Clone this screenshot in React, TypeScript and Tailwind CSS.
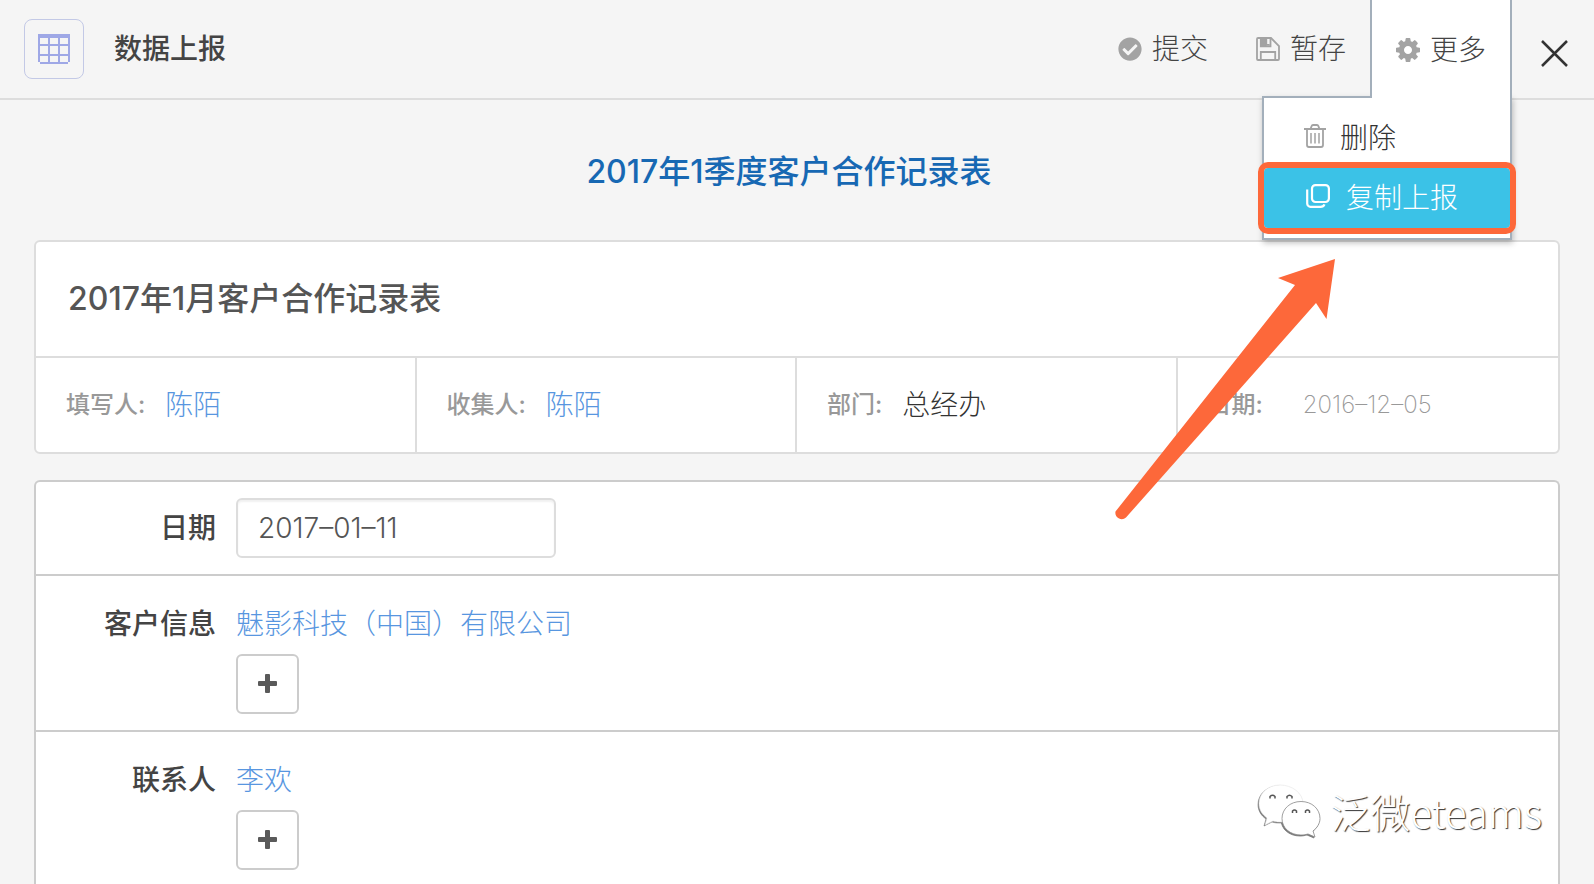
import { useState } from "react";
import type { ReactNode } from "react";
import { FaCheckCircle } from "react-icons/fa";

const META = [
  { label: "填写人:", value: "陈陌", kind: "link" },
  { label: "收集人:", value: "陈陌", kind: "link" },
  { label: "部门:", value: "总经办", kind: "text" },
  { label: "日期:", value: "2016–12–05", kind: "date" },
];

const TOOL_BTN = "flex items-center gap-2.5 px-6 text-[28px] leading-10 font-light text-[#444]";
const MENU_ITEM = "flex h-[60px] w-full items-center text-[28px] leading-10 font-light";

function GridIcon() {
  return (
    <svg viewBox="0 0 32 30" className="h-[30px] w-8" fill="#9fa8e6" shapeRendering="crispEdges">
      <path d="M0 0h32v4H0zM0 4h2v24H0zM10 4h2v24h-2zM20 4h2v24h-2zM30 4h2v24h-2zM2 10h28v2H2zM2 20h28v2H2zM2 28h28v2H2z" />
    </svg>
  );
}

function SaveIcon() {
  return (
    <svg viewBox="0 0 24 24" className="size-6" fill="none" stroke="#a3a3a3" strokeWidth="1.8">
      <path d="M2 1H15L23 9v13a1 1 0 0 1-1 1H2a1 1 0 0 1-1-1V2a1 1 0 0 1 1-1Z" />
      <path d="M4.800 1v8.400h9.700V1M4.800 23v-8h14.400v8" />
      <path d="M4.800 1h5.600v8.400H4.800Z" fill="#a3a3a3" stroke="none" />
      <path d="M10.300 1v6.800h3.400" />
    </svg>
  );
}

function GearIcon() {
  return (
    <svg viewBox="128 128 1536 1536" className="size-6" fill="#a3a3a3">
      <path d="M1152 896q0-106-75-181t-181-75-181 75-75 181 75 181 181 75 181-75 75-181zm512-109v222q0 12-8 23t-20 13l-185 28q-19 54-39 91 35 50 107 138 10 12 10 25t-9 23q-27 37-99 108t-94 71q-12 0-26-9l-138-108q-44 23-91 38-16 136-29 186-7 28-36 28h-222q-14 0-24.500-8.500t-11.500-21.500l-28-184q-49-16-90-37l-141 107q-10 9-25 9-14 0-25-11-126-114-165-168-7-10-7-23 0-12 8-23 15-21 51-66.500t54-70.500q-27-50-41-99l-183-27q-13-2-21-12.500t-8-23.500v-222q0-12 8-23t19-13l186-28q14-46 39-92-40-57-107-138-10-12-10-24 0-10 9-23 26-36 98.500-107.500t94.500-71.500q13 0 26 10l138 107q44-23 91-38 16-136 29-186 7-28 36-28h222q14 0 24.500 8.500t11.500 21.500l28 184q49 16 90 37l142-107q9-9 24-9 13 0 25 10 129 119 165 170 7 8 7 22 0 12-8 23-15 21-51 66.500t-54 70.500q26 50 41 98l183 28q13 2 21 12.500t8 23.500z" />
    </svg>
  );
}

function TrashIcon() {
  return (
    <svg viewBox="0 0 22 24" className="mb-1 h-6 w-[22px]" fill="none" stroke="#a3a3a3" strokeWidth="1.8">
      <path d="M0 5h22M6.500 5l1.200-3.100Q8 1 9 1h4q1 0 1.300.9L15.500 5" />
      <path d="M3 5v16a2 2 0 0 0 2 2h12a2 2 0 0 0 2-2V5" />
      <path d="M7 9v10.500M11 9v10.500M15 9v10.500" strokeWidth="1.500" />
    </svg>
  );
}

function CopyIcon() {
  return (
    <svg viewBox="0 0 24 24" className="mb-1 size-6" fill="none" stroke="#fff" strokeWidth="2.2">
      <rect x="6" y="1.100" width="16.900" height="16.900" rx="3.500" />
      <path d="M1.200 5.500V19.500a3.300 3.300 0 0 0 3.300 3.300h10q3 0 4-2.500" />
    </svg>
  );
}

function WechatIcon() {
  return (
    <svg viewBox="0 0 64 54" className="h-[54px] w-16 overflow-visible drop-shadow-[-1px_1px_0_#777]">
      <path
        fill="#fff"
        stroke="#e4e4e4"
        strokeWidth=".6"
        d="M22 1C10 1 1 9 1 19.500c0 6 3 11 8 14.500L7 41l8-4c3 1 6 1 9 1 12 0 21-8 21-18.500S34 1 22 1Z"
      />
      <path
        fill="#fff"
        stroke="#888"
        strokeWidth=".8"
        d="M43 17.500c-11 0-19 7.500-19 17s8 16.500 19 16.500c3 0 5-.5 7-1l7 3-2-6c4-3 7-7.500 7-12.500 0-9.500-8-17-19-17Z"
      />
      <path
        fill="none"
        stroke="#555"
        strokeWidth="1.500"
        d="M12 14.500v-2q2.500-2.500 5 0v2M29 14.500v-2q2.500-2.500 5 0v2M34.500 29v-2q2-2 4 0v2M47.500 29v-2q2-2 4 0v2"
      />
    </svg>
  );
}

function PlusButton({ label }: { label: string }) {
  return (
    <button
      aria-label={label}
      className="flex h-[60px] w-[63px] items-center justify-center rounded-md border-2 border-[#ccc] bg-white pb-0.5"
    >
      <svg viewBox="0 0 19 19" className="size-[19px]" fill="#5a5a5a">
        <path d="M8 0h3q1 0 1 1v6h6q1 0 1 1v3q0 1-1 1h-6v6q0 1-1 1H8q-1 0-1-1v-6H1q-1 0-1-1V8q0-1 1-1h6V1q0-1 1-1Z" />
      </svg>
    </button>
  );
}

function RelatedRow({ label, value, last }: { label: string; value: string; last?: boolean }) {
  return (
    <div className={last ? "flex gap-5 pt-7 pb-4" : "flex gap-5 border-b-2 border-[#ccc] pt-7 pb-4"}>
      <div className="w-[180px] text-right text-[28px] leading-10 font-medium text-[#444]">{label}</div>
      <div className="flex flex-col items-start gap-2.5">
        <a href="#" className="text-[28px] leading-10 font-light text-[#5896e0]">
          {value}
        </a>
        <PlusButton label={`添加${label}`} />
      </div>
    </div>
  );
}

function MetaCell({ label, children }: { label: string; children: ReactNode }) {
  return (
    <div className="flex h-[94px] items-center gap-5 border-r-2 border-[#ddd] pl-[30px] last:border-r-0">
      <span className="text-2xl font-medium text-[#999]">{label}</span>
      {children}
    </div>
  );
}

export default function App() {
  const [open, setOpen] = useState(true);
  const [date, setDate] = useState("2017–01–11");

  return (
    <div className="relative flex h-screen flex-col overflow-hidden bg-[#f5f5f5] font-['Inter','Noto_Sans_CJK_SC',sans-serif]">
      <header className="flex h-[100px] shrink-0 border-b-2 border-[#ddd] pl-6">
        <div className="flex items-center gap-[30px]">
          <div className="flex size-[60px] items-center justify-center rounded-lg border border-[#c3c9e6]">
            <GridIcon />
          </div>
          <h1 className="text-[28px] leading-10 font-medium text-[#444]">数据上报</h1>
        </div>

        <div className="ml-auto flex">
          <button className={TOOL_BTN}>
            <FaCheckCircle className="size-6 text-[#a3a3a3]" />
            提交
          </button>
          <button className={TOOL_BTN}>
            <SaveIcon />
            暂存
          </button>
          <div className="relative flex">
            <button
              onClick={() => setOpen((v) => !v)}
              className="relative z-20 flex items-center gap-2.5 border-x-2 border-[#a3afbb] bg-white px-6 pt-0.5 text-[28px] leading-10 font-light text-[#444]"
            >
              <GearIcon />
              更多
            </button>
            {open && (
              <div className="absolute top-24 right-0 z-10 w-[250px] border-2 border-[#a3afbb] bg-white py-2.5 shadow-[1px_3px_6px_rgba(0,0,0,0.25)]">
                <button className={`${MENU_ITEM} gap-3.5 pl-10 text-[#333]`}>
                  <TrashIcon />
                  删除
                </button>
                <button
                  className={`${MENU_ITEM} gap-4 rounded-sm bg-[#3bc2e7] pl-[42px] text-white outline-[6px] outline-[#fd683a]`}
                >
                  <CopyIcon />
                  复制上报
                </button>
              </div>
            )}
          </div>
          <button aria-label="关闭" className="pt-2 pr-[26px] pl-[29px]">
            <svg viewBox="0 0 27 27" className="size-[27px]" fill="none" stroke="#333" strokeWidth="2.500">
              <path d="M1 1l25 25M26 1L1 26" />
            </svg>
          </button>
        </div>
      </header>

      <main className="flex flex-col px-[34px]">
        <h2 className="pt-12 pr-4 pb-11 text-center text-[32px] leading-[48px] font-medium text-[#1768b3]">
          2017年1季度客户合作记录表
        </h2>

        <section className="rounded-md border-2 border-[#ddd] bg-white">
          <h3 className="flex h-[116px] items-center border-b-2 border-[#ddd] px-8 text-[32px] font-medium text-[#555]">
            2017年1月客户合作记录表
          </h3>
          <div className="grid grid-cols-4">
            {META.map((m) => (
              <MetaCell key={m.label} label={m.label}>
                {m.kind === "link" && (
                  <a href="#" className="text-[28px] font-light text-[#5896e0]">
                    {m.value}
                  </a>
                )}
                {m.kind === "text" && <span className="text-[28px] font-light text-[#333]">{m.value}</span>}
                {m.kind === "date" && <span className="pl-5 text-2xl font-extralight text-[#999]">{m.value}</span>}
              </MetaCell>
            ))}
          </div>
        </section>

        <section className="mt-[26px] rounded-t-md border-2 border-b-0 border-[#ccc] bg-white">
          <div className="flex items-center gap-5 border-b-2 border-[#ccc] py-4">
            <label htmlFor="date" className="w-[180px] text-right text-[28px] leading-10 font-medium text-[#444]">
              日期
            </label>
            <input
              id="date"
              value={date}
              onChange={(e) => setDate(e.target.value)}
              className="h-[60px] w-80 rounded-md border-2 border-[#ddd] bg-white px-5 text-[28px] font-light text-[#555] shadow-[inset_0_2px_2px_rgba(0,0,0,0.06)] outline-none"
            />
          </div>
          <RelatedRow label="客户信息" value="魅影科技（中国）有限公司" />
          <RelatedRow label="联系人" value="李欢" last />
        </section>
      </main>

      {/* pointer to the copy action */}
      <svg
        viewBox="0 0 222 266"
        className="pointer-events-none absolute top-[258px] right-[258px] z-30 h-[266px] w-[222px]"
        fill="#fd683a"
      >
        <path d="M221 1L164 20L181 27L1.500 253.500A6.400 6.400 0 0 0 12 259.500L202 45L212.500 61Z" />
      </svg>

      <div className="pointer-events-none absolute right-[52px] bottom-[46px] flex items-center gap-2">
        <WechatIcon />
        <span className="font-['Noto_Sans_CJK_SC',sans-serif] text-[40px] leading-[54px] font-light text-white [text-shadow:1px_1px_1px_#333]">
          泛微eteams
        </span>
      </div>
    </div>
  );
}
